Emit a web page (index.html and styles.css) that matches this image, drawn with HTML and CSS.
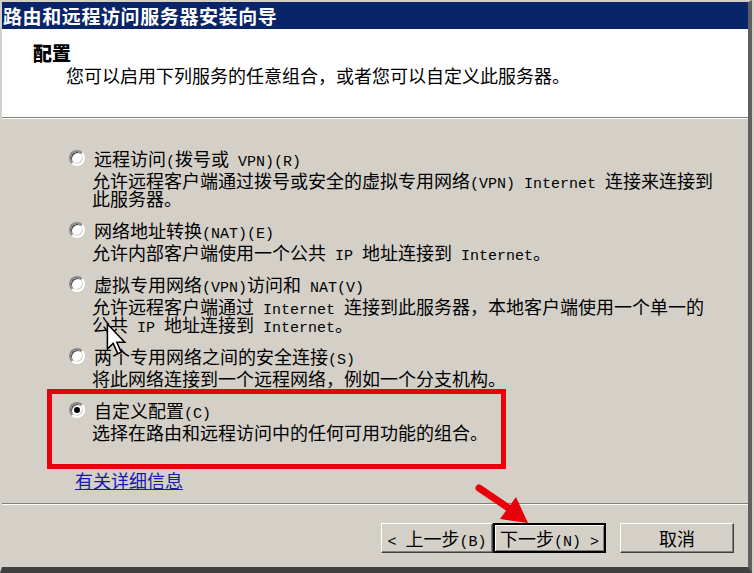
FILE: index.html
```html
<!DOCTYPE html>
<html lang="zh-CN">
<head>
    <meta charset="UTF-8">
    <title>路由和远程访问服务器安装向导</title>
    <link rel="stylesheet" href="styles.css">
</head>
<body>
    <div class="window">
        <div class="titlebar">路由和远程访问服务器安装向导</div>

        <!-- Header -->
        <div class="header">
            <div class="header-title">配置</div>
            <div class="header-sub">您可以启用下列服务的任意组合，或者您可以自定义此服务器。</div>
        </div>

        <!-- Options -->
        <div class="content">
            <div class="option">
                <div class="option-label"><span class="radio"></span><span>远程访问<span class="en">(</span>拨号或<span class="en"> VPN)(R)</span></span></div>
                <div class="option-desc">允许远程客户端通过拨号或安全的虚拟专用网络<span class="en">(VPN) Internet </span>连接来连接到<br>此服务器。</div>
            </div>
            <div class="option">
                <div class="option-label"><span class="radio"></span><span>网络地址转换<span class="en">(NAT)(E)</span></span></div>
                <div class="option-desc">允许内部客户端使用一个公共<span class="en"> IP </span>地址连接到<span class="en"> Internet</span>。</div>
            </div>
            <div class="option">
                <div class="option-label"><span class="radio"></span><span>虚拟专用网络<span class="en">(VPN)</span>访问和<span class="en"> NAT(V)</span></span></div>
                <div class="option-desc">允许远程客户端通过<span class="en"> Internet </span>连接到此服务器，本地客户端使用一个单一的<br>公共<span class="en"> IP </span>地址连接到<span class="en"> Internet</span>。</div>
            </div>
            <div class="option">
                <div class="option-label"><span class="radio"></span><span>两个专用网络之间的安全连接<span class="en">(S)</span></span></div>
                <div class="option-desc">将此网络连接到一个远程网络，例如一个分支机构。</div>
            </div>
            <div class="option">
                <div class="option-label"><span class="radio checked"></span><span>自定义配置<span class="en">(C)</span></span></div>
                <div class="option-desc">选择在路由和远程访问中的任何可用功能的组合。</div>
            </div>
            <a class="more" href="#">有关详细信息</a>
        </div>

        <!-- Buttons -->
        <div class="footer">
            <button class="btn btn-back"><span class="en">&lt; </span>上一步<span class="en">(B)</span></button>
            <button class="btn btn-next btn-default">下一步<span class="en">(N) &gt;</span></button>
            <button class="btn btn-cancel">取消</button>
        </div>

        <!-- Annotations over the screenshot -->
        <div class="annot-box"></div>
        <svg class="annot-arrow" width="64" height="50" viewBox="0 0 64 50">
            <line x1="9" y1="8" x2="40" y2="29" stroke="#e8000b" stroke-width="7" stroke-linecap="round"/>
            <polygon points="58,43 46,17 30,39" fill="#e8000b"/>
        </svg>
        <svg class="cursor" width="21" height="32" viewBox="0 0 12 19">
            <polygon points="0.6,0.6 0.6,15.4 4,12.1 6.8,18.2 8.8,17.3 6.2,11.4 10.9,11.4" fill="#fff" stroke="#000" stroke-width="0.9" stroke-linejoin="miter"/>
        </svg>
    </div>
</body>
</html>
```

FILE: styles.css
```css
body {
    margin: 0;
    background-color: #d4d0c8;
    font-family: "Noto Sans CJK SC", sans-serif;
    color: #000;
}

.window {
    position: relative;
    width: 752px;
    height: 573px;
    box-sizing: border-box;
    display: flex;
    flex-direction: column;
    background-color: #d4d0c8;
    border-top: 2px solid #d4d0c8;
    border-left: 2px solid #d4d0c8;
    border-right: 4px solid #5f5f5f;
    border-bottom: 6px solid #404040;
}

/* half-width latin runs, kept out of the line box height */
.en {
    font-family: "Liberation Mono", monospace;
    font-size: 15px;
    line-height: 0;
}

/* Title bar */
.titlebar {
    height: 27px;
    flex-shrink: 0;
    background-color: #0a246a;
    color: #fff;
    font-size: 19px;
    font-weight: 700;
    line-height: 27px;
    letter-spacing: 0.6px;
    padding-left: 1px;
    white-space: nowrap;
}

/* White header */
.header {
    height: 89px;
    flex-shrink: 0;
    box-sizing: border-box;
    background-color: #fff;
    border-bottom: 1px solid #808080;
    padding: 14px 0 0 31px;
}

.header-title {
    font-size: 19px;
    font-weight: 900;
    line-height: 20px;
}

.header-sub {
    margin: 2px 0 0 33px;
    font-size: 18px;
    line-height: 20px;
}

/* Options */
.content {
    height: 386px;
    flex-shrink: 0;
    box-sizing: border-box;
    border-top: 1px solid #fff;
    border-bottom: 1px solid #808080;
    padding: 29px 0 0 67px;
    display: flex;
    flex-direction: column;
    align-items: flex-start;
    font-size: 18px;
}

.option + .option {
    margin-top: 13px;
}

.option-label {
    display: flex;
    align-items: center;
    gap: 9px;
    height: 20px;
    line-height: 20px;
    white-space: nowrap;
}

.option-desc {
    margin-top: 3px;
    padding-left: 23px;
    line-height: 18px;
    white-space: nowrap;
}

.radio {
    position: relative;
    width: 16px;
    height: 16px;
    box-sizing: border-box;
    border-radius: 50%;
    background-color: #fff;
    border: 2px solid;
    border-color: #8a8a8a #fff #fff #8a8a8a;
    box-shadow: inset 1px 1px 0 #404040, inset -1px -1px 0 #d4d0c8;
}

.radio.checked::after {
    content: "";
    position: absolute;
    left: 3px;
    top: 3px;
    width: 6px;
    height: 6px;
    border-radius: 50%;
    background-color: #000;
}

.more {
    margin: 29px 0 0 6px;
    color: #1a1aa8;
    text-decoration: underline;
    line-height: 20px;
}

/* Buttons */
.footer {
    flex: 1;
    box-sizing: border-box;
    border-top: 1px solid #fff;
    display: flex;
    justify-content: flex-end;
    align-items: flex-start;
    padding: 18px 14px 0 0;
}

.btn {
    height: 30px;
    box-sizing: border-box;
    padding: 0;
    background-color: #d4d0c8;
    font-family: "Noto Sans CJK SC", sans-serif;
    font-size: 18px;
    line-height: 26px;
    color: #000;
    border: 1px solid;
    border-color: #fff #404040 #404040 #fff;
    box-shadow: inset -1px -1px 0 #808080;
    white-space: nowrap;
}

.btn-back { width: 112px; }
.btn-next { width: 113px; }
.btn-cancel { width: 114px; margin-left: 14px; }

.btn-default {
    border: 2px solid #000;
    box-shadow: inset 1px 1px 0 #fff, inset -1px -1px 0 #808080;
}

/* Annotations */
.annot-box {
    position: absolute;
    left: 45px;
    top: 387px;
    width: 459px;
    height: 80px;
    box-sizing: border-box;
    border: 5px solid #e8000b;
}

.annot-arrow {
    position: absolute;
    left: 468px;
    top: 478px;
}

.cursor {
    position: absolute;
    left: 104px;
    top: 321px;
}
```
